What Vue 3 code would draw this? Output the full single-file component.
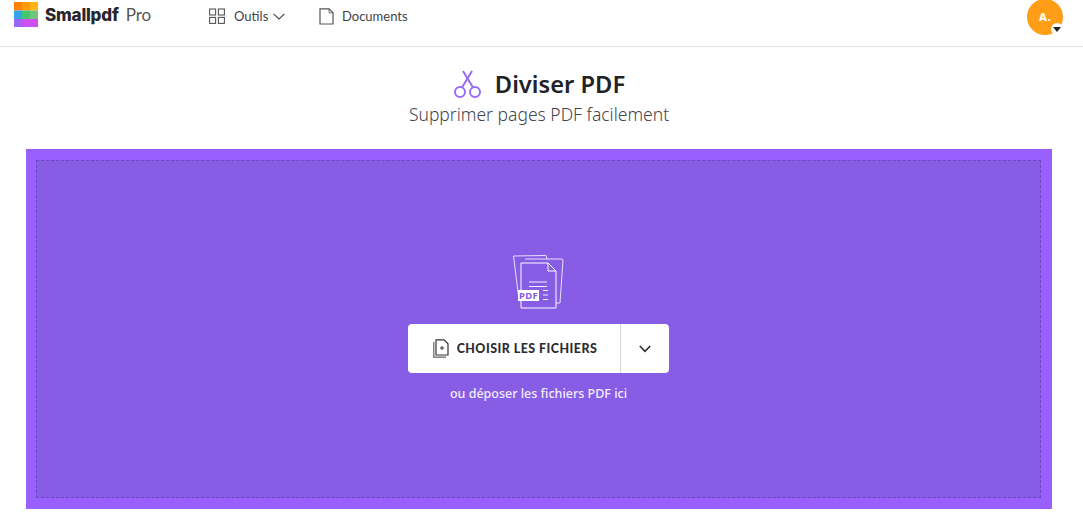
<template>
    <div class="page">
        <header class="topbar">
            <div class="brand">
                <svg class="logo" viewBox="0 0 24 25" width="24" height="25">
                    <rect x="0" y="0" width="8" height="8.5" fill="#ff8205" />
                    <rect x="8" y="0" width="8" height="8.5" fill="#ff9a0a" />
                    <rect x="16" y="0" width="8" height="8.5" fill="#ffb414" />
                    <rect x="0" y="8.5" width="8" height="8.5" fill="#36a4e8" />
                    <rect x="8" y="8.5" width="8" height="8.5" fill="#45c76b" />
                    <rect x="16" y="8.5" width="8" height="8.5" fill="#72c47c" />
                    <rect x="0" y="17" width="8" height="8" fill="#9a66f5" />
                    <rect x="8" y="17" width="16" height="8" fill="#cf50f2" />
                </svg>
                <span class="brand-name">Smallpdf</span>
                <span class="brand-pro">Pro</span>
            </div>
            <nav class="nav">
                <a class="nav-item tools">
                    <svg viewBox="0 0 16 16" width="16" height="16" fill="none" stroke="#555" stroke-width="1.1">
                        <rect x="0.6" y="1" width="6" height="6" />
                        <rect x="9.4" y="1" width="6" height="6" />
                        <rect x="0.6" y="9.4" width="6" height="6" />
                        <rect x="9.4" y="9.4" width="6" height="6" />
                    </svg>
                    <span>Outils</span>
                    <svg viewBox="0 0 12 7" width="12" height="7" fill="none" stroke="#444" stroke-width="1.1">
                        <path d="M0.5 0.8 L6 6 L11.5 0.8" />
                    </svg>
                </a>
                <a class="nav-item docs">
                    <svg viewBox="0 0 15 17" width="15" height="17" fill="none" stroke="#555" stroke-width="1.2">
                        <path d="M1 0.8 H10 L14 4.8 V16 H1 Z" />
                        <path d="M10 0.8 V4.8 H14" stroke-width="0.8" />
                    </svg>
                    <span>Documents</span>
                </a>
            </nav>
            <div class="avatar">
                A.
                <span class="avatar-caret"></span>
            </div>
        </header>

        <section class="title-block">
            <div class="title-row">
                <svg class="scissors" viewBox="0 0 29 28" width="29" height="28" fill="none" stroke="#9a6bf5" stroke-width="2">
                    <circle cx="7" cy="22" r="5" />
                    <circle cx="22" cy="22" r="5" />
                    <path d="M9 17.4 L19 1" />
                    <path d="M20 17.4 L10 1" />
                </svg>
                <h1>Diviser PDF</h1>
            </div>
            <p class="subtitle">Supprimer pages PDF facilement</p>
        </section>

        <section class="drop-panel">
            <div class="drop-zone">
                <svg class="files-art" viewBox="0 0 52 56" width="52" height="56" fill="none" stroke="#fff">
                    <path d="M0.5 3 L33 2.5 L34 6" stroke-width="0.9" opacity="0.9" />
                    <path d="M0.5 3 L6 47 L8 47" stroke-width="0.9" opacity="0.9" />
                    <path d="M12 6 L49 6 L50 7 L47 50 L43 50" stroke-width="0.9" opacity="0.9" />
                    <path d="M8 10 H35 L43 18 V55 H8 V47" stroke-width="1" />
                    <path d="M8 10 V37" stroke-width="1" />
                    <path d="M35 10 V18 H43" stroke-width="1" />
                    <path d="M16 29 H34 M16 33.5 H34 M30 37.5 H35 M30 42 H35 M30 46.5 H35" stroke-width="1" opacity="0.9" />
                    <rect x="5" y="37" width="21" height="11" fill="#fff" stroke="none" />
                    <text x="15.5" y="46" class="pdf-tag" text-anchor="middle">PDF</text>
                </svg>
                <div class="picker">
                    <button class="picker-main" type="button">
                        <svg viewBox="0 0 16 19" width="16" height="19" fill="none">
                            <path d="M0.8 3 V18.2 H13" stroke="#666" stroke-width="1.2" />
                            <path d="M3 0.8 H11 L15 4.8 V16 H3 Z" stroke="#333" stroke-width="1.2" fill="#fff" />
                            <path d="M7 9 H11 M9 7 V11" stroke="#333" stroke-width="1" />
                        </svg>
                        <span>CHOISIR LES FICHIERS</span>
                    </button>
                    <button class="picker-more" type="button">
                        <svg viewBox="0 0 12 8" width="12" height="8" fill="none" stroke="#2c2c32" stroke-width="1.6">
                            <path d="M0.8 1 L6 6.4 L11.2 1" />
                        </svg>
                    </button>
                </div>
                <p class="drop-hint">ou déposer les fichiers PDF ici</p>
            </div>
        </section>
    </div>
</template>

<script setup>
</script>

<style>
html,
body {
    margin: 0;
    background: #fff;
    overflow: hidden;
}
</style>

<style scoped>
.page {
    width: 1083px;
    height: 517px;
    background: #fff;
    font-family: "Noto Sans", sans-serif;
    overflow: hidden;
}

.topbar {
    display: flex;
    align-items: flex-start;
    height: 46px;
    border-bottom: 1px solid #e1e1e1;
    padding-left: 14px;
    padding-right: 20px;
}

.brand {
    display: flex;
    align-items: center;
    height: 30px;
    width: 195px;
}

.logo {
    margin-top: -1px;
}

.brand-name {
    margin-left: 7px;
    margin-top: -1px;
    font-family: Inter, sans-serif;
    font-weight: 800;
    font-size: 17px;
    letter-spacing: -0.2px;
    color: #26262c;
}

.brand-pro {
    margin-left: 7px;
    margin-top: -2px;
    font-family: Lato, sans-serif;
    font-size: 17px;
    color: #555;
}

.nav {
    display: flex;
    align-items: center;
    height: 32px;
    flex: 1;
}

.nav-item {
    display: flex;
    align-items: center;
    font-family: Lato, sans-serif;
    font-size: 13px;
    color: #444;
}

.tools {
    width: 110px;
}

.tools span {
    margin: 0 5px 0 9px;
}

.docs span {
    margin-left: 8px;
}

.avatar {
    position: relative;
    width: 36px;
    height: 36px;
    margin-top: -1px;
    border-radius: 50%;
    background: #ff9e16;
    color: #fff;
    font-family: Inter, sans-serif;
    font-weight: 800;
    font-size: 11px;
    line-height: 36px;
    text-align: center;
}

.avatar-caret {
    position: absolute;
    right: 0;
    bottom: 0;
    width: 12px;
    height: 12px;
    border-radius: 50%;
    background: #fff;
}

.avatar-caret::after {
    content: "";
    position: absolute;
    left: 2px;
    top: 4px;
    border-left: 4px solid transparent;
    border-right: 4px solid transparent;
    border-top: 5px solid #222;
}

.title-block {
    display: flex;
    flex-direction: column;
    align-items: center;
    height: 102px;
    padding-right: 5px;
}

.title-row {
    display: flex;
    align-items: center;
    gap: 13px;
    height: 36px;
    margin-top: 19px;
}

.title-row h1 {
    margin: 0;
    font-size: 23.7px;
    font-weight: 600;
    color: #222228;
}

.subtitle {
    margin: 0;
    font-size: 17.5px;
    line-height: 24px;
    font-weight: 300;
    color: #44444c;
}

.drop-panel {
    box-sizing: border-box;
    width: 1026px;
    height: 360px;
    margin-left: 26px;
    padding: 11px 11px 11px 10px;
    background: #9a5fff;
}

.drop-zone {
    box-sizing: border-box;
    height: 100%;
    display: flex;
    flex-direction: column;
    align-items: center;
    padding-top: 92px;
    background: #885de6;
    border: 1px dashed #7048c4;
}

.files-art {
    display: block;
}

.pdf-tag {
    font-family: "Noto Sans", sans-serif;
    font-weight: 700;
    font-size: 9.5px;
    fill: #885de6;
    stroke: none;
    letter-spacing: 0.3px;
}

.picker {
    display: flex;
    width: 261px;
    height: 49px;
    margin-top: 15px;
    border-radius: 4px;
    background: #fff;
    overflow: hidden;
}

.picker button {
    border: 0;
    padding: 0;
    background: none;
    display: flex;
    align-items: center;
    justify-content: center;
}

.picker-main {
    width: 213px;
    gap: 8px;
    border-right: 1px solid #d8d8d8 !important;
    padding-left: 2px !important;
}

.picker-main span {
    font-family: Lato, sans-serif;
    font-weight: 900;
    font-size: 12.4px;
    letter-spacing: 0.5px;
    color: #2c2c32;
}

.picker-more {
    flex: 1;
}

.drop-hint {
    margin: 12px 0 0;
    font-size: 12.5px;
    line-height: 18px;
    font-weight: 500;
    color: #f3edff;
}
</style>
